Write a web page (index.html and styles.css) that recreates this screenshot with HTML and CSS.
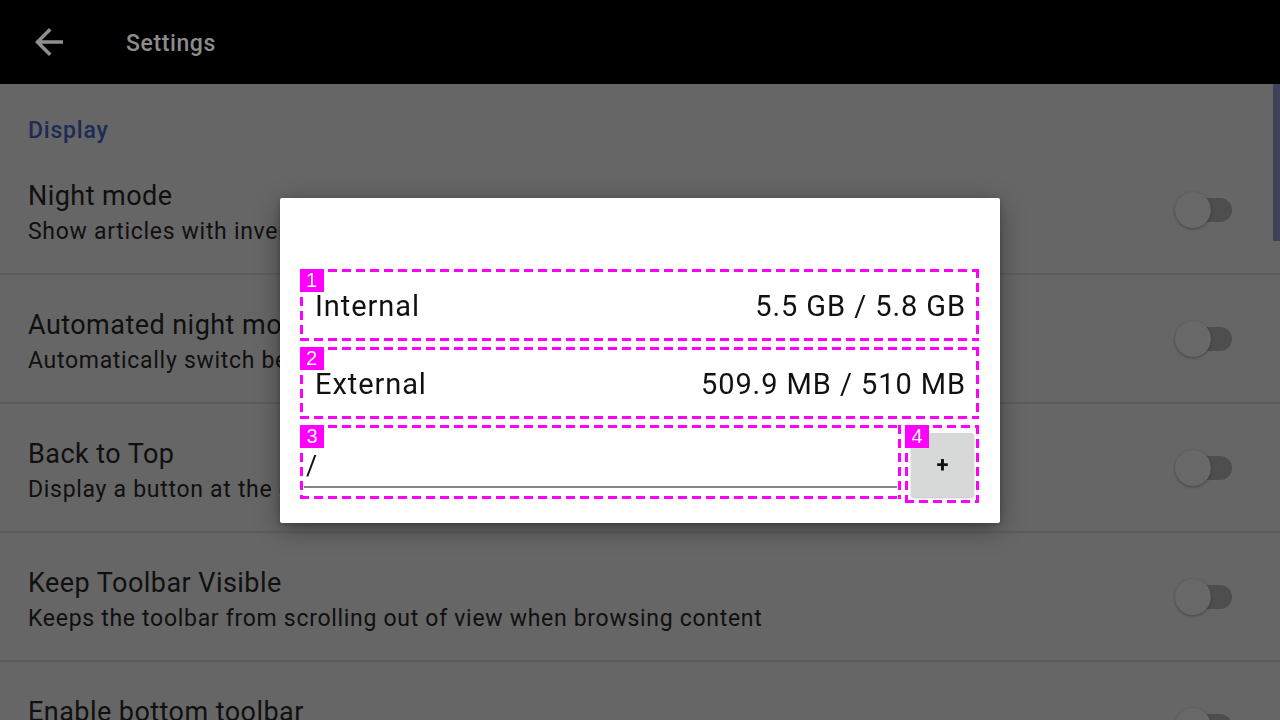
FILE: index.html
```html
<!DOCTYPE html>
<html lang="en">
<head>
<meta charset="utf-8">
<title>Settings</title>
<link rel="stylesheet" href="styles.css">
</head>
<body>
<div class="app">
  <header class="topbar">
    <svg class="back" viewBox="0 0 24 24" aria-hidden="true"><path d="M20 11H7.83l5.59-5.59L12 4l-8 8 8 8 1.41-1.41L7.83 13H20v-2z"/></svg>
    <span class="title">Settings</span>
  </header>
  <main class="list">
    <div class="section">Display</div>
    <div class="row">
      <div class="texts"><div class="r-title">Night mode</div><div class="r-sub">Show articles with inverted colors</div></div>
      <div class="switch"><span class="thumb"></span></div>
    </div>
    <div class="row">
      <div class="texts"><div class="r-title">Automated night mode</div><div class="r-sub">Automatically switch between night and day mode</div></div>
      <div class="switch"><span class="thumb"></span></div>
    </div>
    <div class="row">
      <div class="texts"><div class="r-title">Back to Top</div><div class="r-sub">Display a button at the end of articles to return to top</div></div>
      <div class="switch"><span class="thumb"></span></div>
    </div>
    <div class="row">
      <div class="texts"><div class="r-title">Keep Toolbar Visible</div><div class="r-sub">Keeps the toolbar from scrolling out of view when browsing content</div></div>
      <div class="switch"><span class="thumb"></span></div>
    </div>
    <div class="row">
      <div class="texts"><div class="r-title">Enable bottom toolbar</div><div class="r-sub">Show the toolbar at the bottom of the screen</div></div>
      <div class="switch"><span class="thumb"></span></div>
    </div>
  </main>
  <div class="scrollbar"></div>
</div>

<div class="scrim">
  <div class="dialog">
    <div class="storage mark" data-n="1"><span>Internal</span><span>5.5 GB / 5.8 GB</span></div>
    <div class="storage mark" data-n="2"><span>External</span><span>509.9 MB / 510 MB</span></div>
    <div class="path-row">
      <div class="path mark" data-n="3"><div class="field">/</div></div>
      <div class="addbox mark" data-n="4"><div class="add">+</div></div>
    </div>
  </div>
</div>
</body>
</html>
```

FILE: styles.css
```css
html, body {
  margin: 0;
  padding: 0;
  width: 1280px;
  height: 720px;
  overflow: hidden;
  background: #666666;
  font-family: Roboto, "Noto Sans", sans-serif;
}

.app {
  position: relative;
  width: 1280px;
  height: 720px;
  overflow: hidden;
}

.topbar {
  height: 84px;
  background: #000;
  display: flex;
  align-items: center;
  padding-left: 28px;
  box-sizing: border-box;
}

.back {
  width: 42px;
  height: 42px;
  fill: #8f8f8f;
}

.title {
  margin-left: 56px;
  margin-top: 3px;
  color: #8c8c8c;
  font-size: 23px;
  font-weight: 500;
  letter-spacing: 0.6px;
}

.list {
  background: #666666;
}

.section {
  height: 62px;
  box-sizing: border-box;
  padding: 33px 28px 0;
  line-height: 28px;
  font-size: 23px;
  font-weight: 500;
  letter-spacing: 0.8px;
  color: #1c2b57;
}

.row {
  height: 129px;
  box-sizing: border-box;
  border-bottom: 2px solid #5c5c5c;
  display: flex;
  align-items: flex-start;
  padding: 33px 48px 0 28px;
}

.texts {
  flex: 1;
  color: #101010;
  white-space: nowrap;
}

.r-title {
  font-size: 27px;
  line-height: 34px;
  letter-spacing: 0.45px;
}

.r-sub {
  font-size: 23px;
  line-height: 38px;
  letter-spacing: 0.7px;
}

.switch {
  position: relative;
  width: 57px;
  height: 24px;
  margin-top: 19px;
  display: flex;
  justify-content: flex-end;
}

.switch::before {
  content: "";
  width: 52px;
  height: 24px;
  border-radius: 12px;
  background: #4e4e4e;
}

.thumb {
  position: absolute;
  left: 0;
  top: -6px;
  width: 36px;
  height: 36px;
  border-radius: 50%;
  background: #686868;
  box-shadow: 0 1px 3px rgba(0, 0, 0, 0.35);
}

.scrollbar {
  position: absolute;
  right: 0;
  top: 84px;
  width: 7px;
  height: 157px;
  background: #3d4459;
}

.scrim {
  position: fixed;
  inset: 0;
  display: flex;
  align-items: center;
  justify-content: center;
}

.dialog {
  width: 720px;
  height: 325px;
  box-sizing: border-box;
  background: #fff;
  border-radius: 2px;
  box-shadow: 0 6px 24px rgba(0, 0, 0, 0.35), 0 2px 6px rgba(0, 0, 0, 0.2);
  padding: 71px 21px 20px 20px;
  display: flex;
  flex-direction: column;
  gap: 6px;
}

.mark {
  position: relative;
  box-sizing: border-box;
  border: 3px solid transparent;
  background:
    repeating-linear-gradient(90deg, #ff00ff 0 9px, transparent 9px 14px) left top / 100% 3px no-repeat,
    repeating-linear-gradient(90deg, #ff00ff 0 9px, transparent 9px 14px) left bottom / 100% 3px no-repeat,
    repeating-linear-gradient(180deg, #ff00ff 0 9px, transparent 9px 14px) left top / 3px 100% no-repeat,
    repeating-linear-gradient(180deg, #ff00ff 0 9px, transparent 9px 14px) right top / 3px 100% no-repeat;
  background-origin: border-box;
}

.mark::before {
  content: attr(data-n);
  position: absolute;
  left: -3px;
  top: -3px;
  width: 24px;
  height: 23px;
  background: #ff00ff;
  color: #fff;
  font-family: "Liberation Sans", Arial, sans-serif;
  font-size: 20px;
  line-height: 23px;
  text-align: center;
}

.storage {
  height: 72px;
  display: flex;
  align-items: center;
  justify-content: space-between;
  padding: 3px 10px 0 12px;
  font-size: 29px;
  color: #111;
  letter-spacing: 0.93px;
}

.path-row {
  display: flex;
  align-items: flex-start;
  gap: 4px;
}

.path {
  flex: 1;
  height: 74px;
  padding: 0 1px;
}

.field {
  height: 60px;
  box-sizing: border-box;
  border-bottom: 2px solid #858585;
  display: flex;
  align-items: flex-end;
  padding: 0 0 5px 2px;
  font-size: 27px;
  line-height: 30px;
  color: #111;
}

.addbox {
  width: 74px;
  height: 78px;
  padding: 5px 2px 0 3px;
}

.add {
  width: 63px;
  height: 64px;
  background: #d7d8d8;
  border-radius: 3px;
  box-shadow: 0 1px 2px rgba(0, 0, 0, 0.25);
  display: flex;
  align-items: center;
  justify-content: center;
  font-size: 22px;
  font-weight: 700;
  color: #111;
}
```
